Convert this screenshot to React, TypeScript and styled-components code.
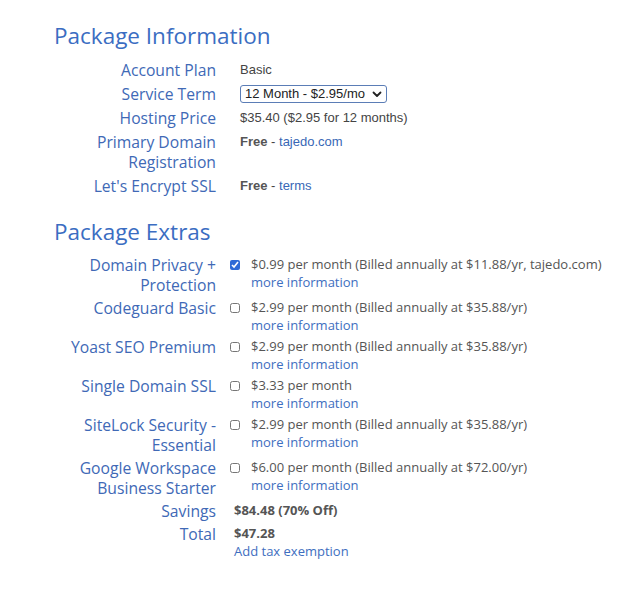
import React from "react";
import styled, { createGlobalStyle } from "styled-components";

const Global = createGlobalStyle`
  html, body { margin: 0; padding: 0; background: #fff; }
  body { font-family: "Open Sans", sans-serif; }
`;

const Page = styled.div`
  padding: 20px 0 0 54px;
  width: 567px;
`;

const Heading = styled.h2<{ $top?: number }>`
  margin: ${(p) => p.$top ?? 0}px 0 0 0;
  font-family: "Open Sans", sans-serif;
  font-weight: 400;
  font-size: 22.5px;
  line-height: 32px;
  color: #3b6dc2;
`;

const Section = styled.section<{ $top: number; $gap: number }>`
  display: flex;
  flex-direction: column;
  gap: ${(p) => p.$gap}px;
  margin-top: ${(p) => p.$top}px;
`;

const Row = styled.div<{ $gap: number }>`
  display: grid;
  grid-template-columns: 162px 1fr;
  column-gap: ${(p) => p.$gap}px;
  align-items: start;
`;

const Label = styled.div`
  text-align: right;
  font-family: "Open Sans", sans-serif;
  font-size: 15.7px;
  line-height: 20px;
  color: #4069b6;
`;

const Value = styled.div`
  font-family: "Liberation Sans", Arial, sans-serif;
  font-size: 13px;
  line-height: 20px;
  color: #444;
`;

const Strong = styled.b`
  font-weight: 700;
  color: #555;
`;

const Link = styled.a`
  color: #3867b6;
  text-decoration: none;
`;

const Select = styled.div`
  display: inline-flex;
  align-items: center;
  justify-content: space-between;
  box-sizing: border-box;
  width: 147px;
  height: 18px;
  margin-top: 1px;
  padding: 0 4px 0 4px;
  border: 1px solid #5b7db6;
  border-radius: 3px;
  font-family: "Liberation Sans", Arial, sans-serif;
  font-size: 13px;
  color: #222;
  svg { flex: none; }
`;

const Extra = styled.div`
  display: flex;
  align-items: flex-start;
  gap: 11px;
`;

const Box = styled.input`
  width: 10px;
  height: 10px;
  margin: 5px 0 0 0;
  flex: none;
  accent-color: #2e6ad6;
`;

const ExtraText = styled.div`
  font-family: "Open Sans", sans-serif;
  font-size: 13px;
  line-height: 17.5px;
  color: #555;
  padding-top: 1px;
`;

const More = styled.a`
  display: block;
  color: #3e6ec0;
  text-decoration: none;
`;

const Sum = styled.div`
  font-family: "Open Sans", sans-serif;
  font-size: 13px;
  line-height: 18px;
  color: #555;
  font-weight: 700;
`;

const TaxLink = styled.a`
  display: block;
  font-weight: 400;
  color: #3e6ec0;
  text-decoration: none;
`;

const extras = [
  { label: "Domain Privacy + Protection", text: "$0.99 per month (Billed annually at $11.88/yr, tajedo.com)", checked: true },
  { label: "Codeguard Basic", text: "$2.99 per month (Billed annually at $35.88/yr)", checked: false },
  { label: "Yoast SEO Premium", text: "$2.99 per month (Billed annually at $35.88/yr)", checked: false },
  { label: "Single Domain SSL", text: "$3.33 per month", checked: false },
  { label: "SiteLock Security - Essential", text: "$2.99 per month (Billed annually at $35.88/yr)", checked: false },
  { label: "Google Workspace Business Starter", text: "$6.00 per month (Billed annually at $72.00/yr)", checked: false },
];

function Chevron() {
  return (
    <svg width="10" height="7" viewBox="0 0 10 7">
      <path d="M1.5 1.5 L5 5 L8.5 1.5" fill="none" stroke="#222" strokeWidth="1.8" strokeLinecap="round" strokeLinejoin="round" />
    </svg>
  );
}

export default function App() {
  return (
    <>
      <Global />
      <Page>
        <Heading>Package Information</Heading>
        <Section $top={8} $gap={4}>
          <Row $gap={24}>
            <Label>Account Plan</Label>
            <Value>Basic</Value>
          </Row>
          <Row $gap={24}>
            <Label>Service Term</Label>
            <Value>
              <Select>
                <span>12 Month - $2.95/mo</span>
                <Chevron />
              </Select>
            </Value>
          </Row>
          <Row $gap={24}>
            <Label>Hosting Price</Label>
            <Value>$35.40 ($2.95 for 12 months)</Value>
          </Row>
          <Row $gap={24}>
            <Label>Primary Domain Registration</Label>
            <Value>
              <Strong>Free</Strong> - <Link>tajedo.com</Link>
            </Value>
          </Row>
          <Row $gap={24}>
            <Label>Let's Encrypt SSL</Label>
            <Value>
              <Strong>Free</Strong> - <Link>terms</Link>
            </Value>
          </Row>
        </Section>
        <Heading $top={20}>Package Extras</Heading>
        <Section $top={7} $gap={3}>
          {extras.map((e) => (
            <Row $gap={14} key={e.label}>
              <Label>{e.label}</Label>
              <Extra>
                <Box type="checkbox" defaultChecked={e.checked} />
                <ExtraText>
                  {e.text}
                  <More>more information</More>
                </ExtraText>
              </Extra>
            </Row>
          ))}
          <Row $gap={18}>
            <Label>Savings</Label>
            <Sum>$84.48 (70% Off)</Sum>
          </Row>
          <Row $gap={18}>
            <Label>Total</Label>
            <Sum>
              $47.28
              <TaxLink>Add tax exemption</TaxLink>
            </Sum>
          </Row>
        </Section>
      </Page>
    </>
  );
}
